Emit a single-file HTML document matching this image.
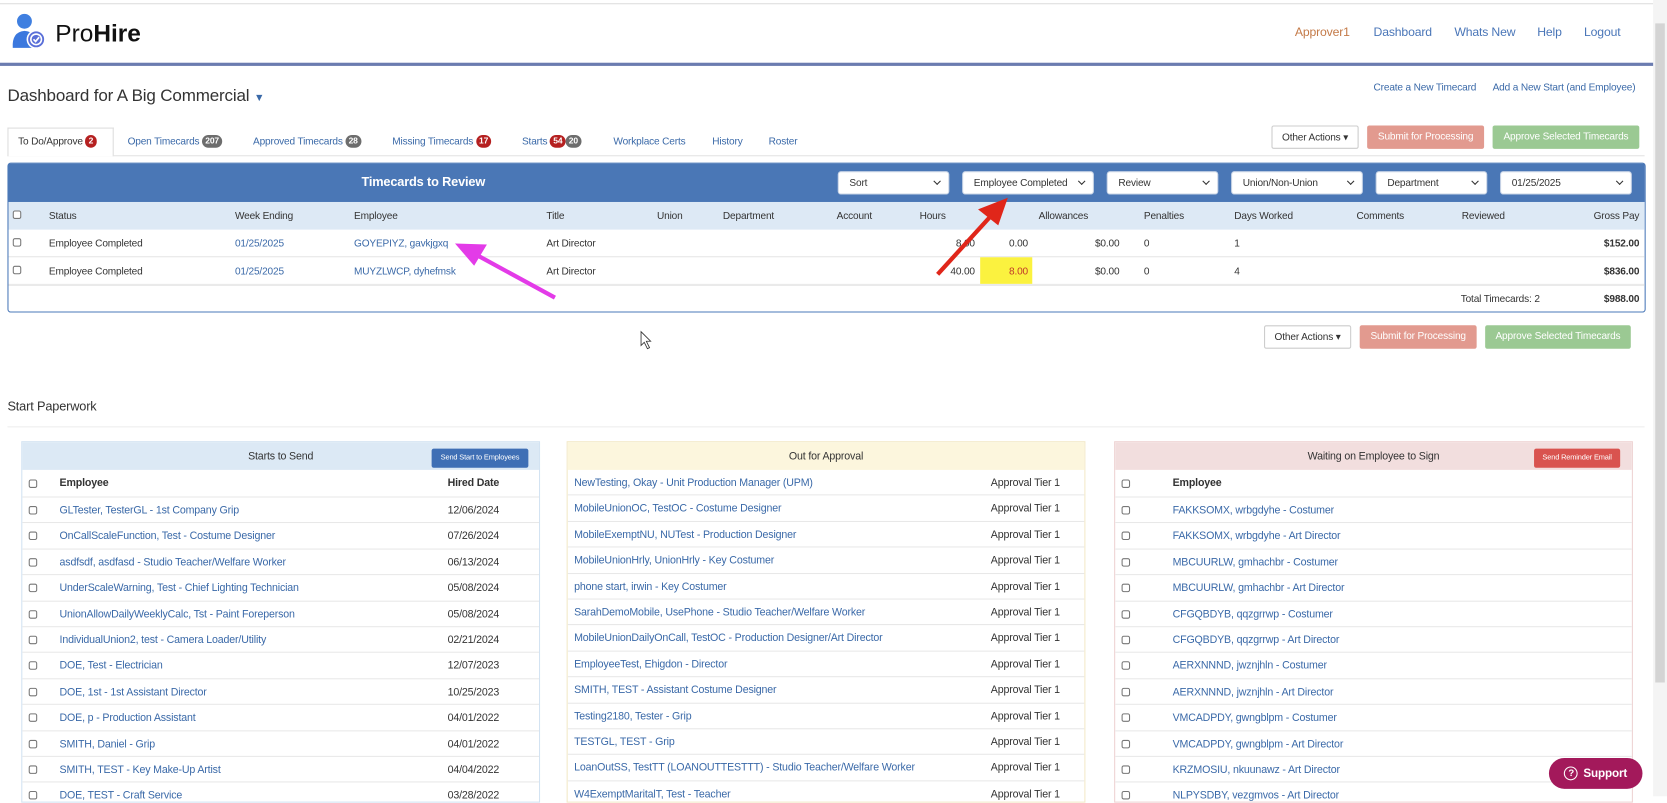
<!DOCTYPE html>
<html><head><meta charset="utf-8">
<style>
*{box-sizing:border-box;margin:0;padding:0}
html,body{width:1667px;height:796px;overflow:hidden;background:#fff}
#w{position:absolute;left:0;top:0;width:1568px;height:749px;transform:scale(1.0631);transform-origin:0 0;font-family:"Liberation Sans",sans-serif;font-size:10px;color:#333;letter-spacing:-0.15px}
.a{position:absolute;white-space:nowrap}
.lk{color:#3a69a8}
.cb{position:absolute;width:8px;height:8px;border:1px solid #777;border-radius:2px;background:#fff}
.badge{display:inline-block;border-radius:7px;color:#fff;font-size:8px;font-weight:bold;padding:1px 3px;line-height:10px;vertical-align:1px}
.red{background:#b52020}.gray{background:#6d6d6d}
.btn{position:absolute;height:22px;border-radius:2px;font-size:9.5px;line-height:22px;text-align:center;color:#fff}
.sel{position:absolute;top:161px;height:22px;background:#fff;border:1px solid #c8d4e6;border-radius:3px;font-size:9.5px;line-height:21px;padding-left:10px;color:#333}
.sel:after{content:"";position:absolute;right:8px;top:6px;width:4px;height:4px;border-right:1.5px solid #333;border-bottom:1.5px solid #333;transform:rotate(45deg)}
.panel{position:absolute;top:415px;width:488px;height:340px;border:1px solid #d5e2ef;overflow:hidden}
.ph{height:26px;line-height:27px;text-align:center;font-size:10px;position:relative}
.row{position:relative;height:24.4px;line-height:25px;border-bottom:1px solid #e8e8e8;font-size:10px}
.row .cb{left:6px;top:8px}
</style></head><body><div id="w">
<div class="a" style="left:0;top:3px;width:1555px;height:1px;background:#ddd"></div>
<div class="a" style="left:1555px;top:0;width:13px;height:749px;background:#f4f4f4"></div>
<div class="a" style="left:1557px;top:22px;width:9px;height:620px;background:#d4d4d4"></div>
<svg class="a" style="left:10px;top:12px" width="34" height="36" viewBox="0 0 34 36">
<circle cx="13" cy="8" r="7" fill="#3f7fe0"/>
<path d="M2 33 Q1 18 13 17 Q24 18 24 28 L24 33 Z" fill="#3b78de"/>
<circle cx="24" cy="25" r="9" fill="#fff"/>
<circle cx="24" cy="25" r="7.5" fill="#5a6fd8"/>
<circle cx="24" cy="25" r="5" fill="none" stroke="#fff" stroke-width="1.5"/>
<path d="M21.5 25 L23.5 27 L26.8 23" fill="none" stroke="#fff" stroke-width="1.6"/>
</svg>
<div class="a" style="left:52px;top:18px;font-size:23px;color:#111;letter-spacing:0">Pro<b>Hire</b></div>
<div class="a" style="left:1218px;top:25px;font-size:11.5px;color:#c47a48">Approver1</div>
<div class="a lk" style="left:1292px;top:25px;font-size:11.5px;color:#4a76b8">Dashboard</div>
<div class="a lk" style="left:1368px;top:25px;font-size:11.5px;color:#4a76b8">Whats New</div>
<div class="a lk" style="left:1446px;top:25px;font-size:11.5px;color:#4a76b8">Help</div>
<div class="a lk" style="left:1490px;top:25px;font-size:11.5px;color:#4a76b8">Logout</div>
<div class="a" style="left:0;top:59px;width:1555px;height:3px;background:#6b7cb0"></div>
<div class="a" style="left:7px;top:82px;font-size:16px;color:#333">Dashboard for A Big Commercial <span style="color:#3a69a8;font-size:10px">▼</span></div>
<div class="a lk" style="left:1292px;top:77px;font-size:9.5px">Create a New Timecard</div>
<div class="a lk" style="left:1404px;top:77px;font-size:9.5px">Add a New Start (and Employee)</div>
<div class="a" style="left:7px;top:146px;width:1540px;height:1px;background:#e3e3e3"></div>
<div class="a" style="left:7px;top:120px;width:100px;height:27px;border:1px solid #ddd;border-bottom:none;background:#fff"></div>
<div class="a" style="left:17px;top:127px;font-size:9.5px">To Do/Approve <span class="badge red">2</span></div>
<div class="a lk" style="left:120px;top:127px;font-size:9.5px">Open Timecards <span class="badge gray">207</span></div>
<div class="a lk" style="left:238px;top:127px;font-size:9.5px">Approved Timecards <span class="badge gray">28</span></div>
<div class="a lk" style="left:369px;top:127px;font-size:9.5px">Missing Timecards <span class="badge red">17</span></div>
<div class="a lk" style="left:491px;top:127px;font-size:9.5px">Starts <span class="badge red">54</span><span class="badge gray">20</span></div>
<div class="a lk" style="left:577px;top:128px;font-size:9.5px">Workplace Certs</div>
<div class="a lk" style="left:670px;top:128px;font-size:9.5px">History</div>
<div class="a lk" style="left:723px;top:128px;font-size:9.5px">Roster</div>
<div class="btn" style="left:1196px;top:118px;width:82px;border:1px solid #ccc;color:#333;background:#fff">Other Actions ▾</div>
<div class="btn" style="left:1286px;top:118px;width:110px;background:#e29a8f">Submit for Processing</div>
<div class="btn" style="left:1404px;top:118px;width:138px;background:#9bc993">Approve Selected Timecards</div>
<div class="a" style="left:7px;top:153px;width:1541px;height:141px;border:1.5px solid #4a78b8;border-radius:3px;background:#fff"></div>
<div class="a" style="left:8px;top:154px;width:1539px;height:36px;background:#4a77b6"></div>
<div class="a" style="left:340px;top:164px;font-size:12px;color:#fff;font-weight:bold">Timecards to Review</div>
<div class="sel" style="left:788px;width:105px">Sort</div>
<div class="sel" style="left:905px;width:124px">Employee Completed</div>
<div class="sel" style="left:1041px;width:105px">Review</div>
<div class="sel" style="left:1158px;width:124px">Union/Non-Union</div>
<div class="sel" style="left:1294px;width:105px">Department</div>
<div class="sel" style="left:1411px;width:124px">01/25/2025</div>
<div class="a" style="left:8px;top:190px;width:1539px;height:26px;background:#dde9f5"></div>
<div class="a" style="left:8px;top:241px;width:1539px;height:1px;background:#e6e6e6"></div>
<div class="a" style="left:8px;top:267px;width:1539px;height:2px;background:#eaeaea"></div>
<div class="cb" style="left:12px;top:198px"></div>
<div class="cb" style="left:12px;top:224px"></div>
<div class="cb" style="left:12px;top:250px"></div>
<div style="font-size:9.5px">
<div class="a" style="left:46px;top:198px">Status</div>
<div class="a" style="left:221px;top:198px">Week Ending</div>
<div class="a" style="left:333px;top:198px">Employee</div>
<div class="a" style="left:514px;top:198px">Title</div>
<div class="a" style="left:618px;top:198px">Union</div>
<div class="a" style="left:680px;top:198px">Department</div>
<div class="a" style="left:787px;top:198px">Account</div>
<div class="a" style="left:865px;top:198px">Hours</div>
<div class="a" style="left:977px;top:198px">Allowances</div>
<div class="a" style="left:1076px;top:198px">Penalties</div>
<div class="a" style="left:1161px;top:198px">Days Worked</div>
<div class="a" style="left:1276px;top:198px">Comments</div>
<div class="a" style="left:1375px;top:198px">Reviewed</div>
<div class="a" style="right:26px;top:198px">Gross Pay</div>
<div class="a" style="left:922px;top:242px;width:49px;height:25px;background:#fbf23f"></div>
<div class="a" style="left:46px;top:224px">Employee Completed</div>
<div class="a lk" style="left:221px;top:224px">01/25/2025</div>
<div class="a lk" style="left:333px;top:224px">GOYEPIYZ, gavkjgxq</div>
<div class="a" style="left:514px;top:224px">Art Director</div>
<div class="a" style="right:651px;top:224px">8.00</div>
<div class="a" style="right:601px;top:224px">0.00</div>
<div class="a" style="right:515px;top:224px">$0.00</div>
<div class="a" style="left:1076px;top:224px">0</div>
<div class="a" style="left:1161px;top:224px">1</div>
<div class="a" style="right:26px;top:224px;font-weight:bold">$152.00</div>
<div class="a" style="left:46px;top:250px">Employee Completed</div>
<div class="a lk" style="left:221px;top:250px">01/25/2025</div>
<div class="a lk" style="left:333px;top:250px">MUYZLWCP, dyhefmsk</div>
<div class="a" style="left:514px;top:250px">Art Director</div>
<div class="a" style="right:651px;top:250px">40.00</div>
<div class="a" style="right:601px;top:250px;color:#c0392b">8.00</div>
<div class="a" style="right:515px;top:250px">$0.00</div>
<div class="a" style="left:1076px;top:250px">0</div>
<div class="a" style="left:1161px;top:250px">4</div>
<div class="a" style="right:26px;top:250px;font-weight:bold">$836.00</div>
<div class="a" style="left:1374px;top:276px">Total Timecards: 2</div>
<div class="a" style="right:26px;top:276px;font-weight:bold">$988.00</div>
</div>
<svg class="a" style="left:0;top:0" width="1568" height="749">
<line x1="522" y1="280" x2="445" y2="238" stroke="#e33be8" stroke-width="4"/>
<polygon points="428,229 458,230 446,250" fill="#e33be8"/>
<line x1="882" y1="258" x2="935" y2="200" stroke="#e0261a" stroke-width="4"/>
<polygon points="948,186 920,197 939,212" fill="#e0261a"/>
<path d="M603 312 L603 325 L606 322 L609 328 L611 327 L608 321 L612 321 Z" fill="#fff" stroke="#333" stroke-width="0.8"/>
</svg>
<div class="btn" style="left:1189px;top:306px;width:82px;border:1px solid #ccc;color:#333;background:#fff">Other Actions ▾</div>
<div class="btn" style="left:1279px;top:306px;width:110px;background:#e29a8f">Submit for Processing</div>
<div class="btn" style="left:1397px;top:306px;width:137px;background:#9bc993">Approve Selected Timecards</div>
<div class="a" style="left:7px;top:375px;font-size:12px">Start Paperwork</div>
<div class="a" style="left:7px;top:401px;width:1540px;height:1px;background:#eee"></div>
<div class="panel" style="left:20px;border-color:#d3e3f2">
<div class="ph" style="background:#dce9f5">Starts to Send<div class="btn" style="left:385px;top:6px;width:91px;height:18px;line-height:18px;font-size:7px;background:#3f6fb5">Send Start to Employees</div></div>
<div class="row" style="height:26px;line-height:26px;font-weight:bold"><div class="cb" style="top:9px"></div><span class="a" style="left:35px">Employee</span><span class="a" style="left:400px">Hired Date</span></div>
<div class="row"><div class="cb"></div><span class="a lk" style="left:35px">GLTester, TesterGL - 1st Company Grip</span><span class="a" style="left:400px">12/06/2024</span></div>
<div class="row"><div class="cb"></div><span class="a lk" style="left:35px">OnCallScaleFunction, Test - Costume Designer</span><span class="a" style="left:400px">07/26/2024</span></div>
<div class="row"><div class="cb"></div><span class="a lk" style="left:35px">asdfsdf, asdfasd - Studio Teacher/Welfare Worker</span><span class="a" style="left:400px">06/13/2024</span></div>
<div class="row"><div class="cb"></div><span class="a lk" style="left:35px">UnderScaleWarning, Test - Chief Lighting Technician</span><span class="a" style="left:400px">05/08/2024</span></div>
<div class="row"><div class="cb"></div><span class="a lk" style="left:35px">UnionAllowDailyWeeklyCalc, Tst - Paint Foreperson</span><span class="a" style="left:400px">05/08/2024</span></div>
<div class="row"><div class="cb"></div><span class="a lk" style="left:35px">IndividualUnion2, test - Camera Loader/Utility</span><span class="a" style="left:400px">02/21/2024</span></div>
<div class="row"><div class="cb"></div><span class="a lk" style="left:35px">DOE, Test - Electrician</span><span class="a" style="left:400px">12/07/2023</span></div>
<div class="row"><div class="cb"></div><span class="a lk" style="left:35px">DOE, 1st - 1st Assistant Director</span><span class="a" style="left:400px">10/25/2023</span></div>
<div class="row"><div class="cb"></div><span class="a lk" style="left:35px">DOE, p - Production Assistant</span><span class="a" style="left:400px">04/01/2022</span></div>
<div class="row"><div class="cb"></div><span class="a lk" style="left:35px">SMITH, Daniel - Grip</span><span class="a" style="left:400px">04/01/2022</span></div>
<div class="row"><div class="cb"></div><span class="a lk" style="left:35px">SMITH, TEST - Key Make-Up Artist</span><span class="a" style="left:400px">04/04/2022</span></div>
<div class="row"><div class="cb"></div><span class="a lk" style="left:35px">DOE, TEST - Craft Service</span><span class="a" style="left:400px">03/28/2022</span></div>
</div>
<div class="panel" style="left:533px;border-color:#f3e9c8">
<div class="ph" style="background:#fcf6dd">Out for Approval</div>
<div class="row"><span class="a lk" style="left:6px">NewTesting, Okay - Unit Production Manager (UPM)</span><span class="a" style="left:398px">Approval Tier 1</span></div>
<div class="row"><span class="a lk" style="left:6px">MobileUnionOC, TestOC - Costume Designer</span><span class="a" style="left:398px">Approval Tier 1</span></div>
<div class="row"><span class="a lk" style="left:6px">MobileExemptNU, NUTest - Production Designer</span><span class="a" style="left:398px">Approval Tier 1</span></div>
<div class="row"><span class="a lk" style="left:6px">MobileUnionHrly, UnionHrly - Key Costumer</span><span class="a" style="left:398px">Approval Tier 1</span></div>
<div class="row"><span class="a lk" style="left:6px">phone start, irwin - Key Costumer</span><span class="a" style="left:398px">Approval Tier 1</span></div>
<div class="row"><span class="a lk" style="left:6px">SarahDemoMobile, UsePhone - Studio Teacher/Welfare Worker</span><span class="a" style="left:398px">Approval Tier 1</span></div>
<div class="row"><span class="a lk" style="left:6px">MobileUnionDailyOnCall, TestOC - Production Designer/Art Director</span><span class="a" style="left:398px">Approval Tier 1</span></div>
<div class="row"><span class="a lk" style="left:6px">EmployeeTest, Ehigdon - Director</span><span class="a" style="left:398px">Approval Tier 1</span></div>
<div class="row"><span class="a lk" style="left:6px">SMITH, TEST - Assistant Costume Designer</span><span class="a" style="left:398px">Approval Tier 1</span></div>
<div class="row"><span class="a lk" style="left:6px">Testing2180, Tester - Grip</span><span class="a" style="left:398px">Approval Tier 1</span></div>
<div class="row"><span class="a lk" style="left:6px">TESTGL, TEST - Grip</span><span class="a" style="left:398px">Approval Tier 1</span></div>
<div class="row"><span class="a lk" style="left:6px">LoanOutSS, TestTT (LOANOUTTESTTT) - Studio Teacher/Welfare Worker</span><span class="a" style="left:398px">Approval Tier 1</span></div>
<div class="row"><span class="a lk" style="left:6px">W4ExemptMaritalT, Test - Teacher</span><span class="a" style="left:398px">Approval Tier 1</span></div>
</div>
<div class="panel" style="left:1048px;border-color:#eed3d3">
<div class="ph" style="background:#f2dede">Waiting on Employee to Sign<div class="btn" style="left:394px;top:6px;width:81px;height:18px;line-height:18px;font-size:7px;background:#d9534f">Send Reminder Email</div></div>
<div class="row" style="height:26px;line-height:26px;font-weight:bold"><div class="cb" style="top:9px"></div><span class="a" style="left:54px">Employee</span></div>
<div class="row"><div class="cb"></div><span class="a lk" style="left:54px">FAKKSOMX, wrbgdyhe - Costumer</span></div>
<div class="row"><div class="cb"></div><span class="a lk" style="left:54px">FAKKSOMX, wrbgdyhe - Art Director</span></div>
<div class="row"><div class="cb"></div><span class="a lk" style="left:54px">MBCUURLW, gmhachbr - Costumer</span></div>
<div class="row"><div class="cb"></div><span class="a lk" style="left:54px">MBCUURLW, gmhachbr - Art Director</span></div>
<div class="row"><div class="cb"></div><span class="a lk" style="left:54px">CFGQBDYB, qqzgrrwp - Costumer</span></div>
<div class="row"><div class="cb"></div><span class="a lk" style="left:54px">CFGQBDYB, qqzgrrwp - Art Director</span></div>
<div class="row"><div class="cb"></div><span class="a lk" style="left:54px">AERXNNND, jwznjhln - Costumer</span></div>
<div class="row"><div class="cb"></div><span class="a lk" style="left:54px">AERXNNND, jwznjhln - Art Director</span></div>
<div class="row"><div class="cb"></div><span class="a lk" style="left:54px">VMCADPDY, gwngblpm - Costumer</span></div>
<div class="row"><div class="cb"></div><span class="a lk" style="left:54px">VMCADPDY, gwngblpm - Art Director</span></div>
<div class="row"><div class="cb"></div><span class="a lk" style="left:54px">KRZMOSIU, nkuunawz - Art Director</span></div>
<div class="row"><div class="cb"></div><span class="a lk" style="left:54px">NLPYSDBY, vezgmvos - Art Director</span></div>
</div>
<div class="a" style="left:1457px;top:713px;width:88px;height:29px;border-radius:15px;background:#a3195b;color:#fff;font-weight:bold;font-size:11px;display:flex;align-items:center;justify-content:center;gap:5px">
<span style="display:inline-block;width:13px;height:13px;border:1.5px solid #fff;border-radius:50%;font-size:9px;line-height:10px;text-align:center">?</span><span>Support</span></div>
</div></body></html>
